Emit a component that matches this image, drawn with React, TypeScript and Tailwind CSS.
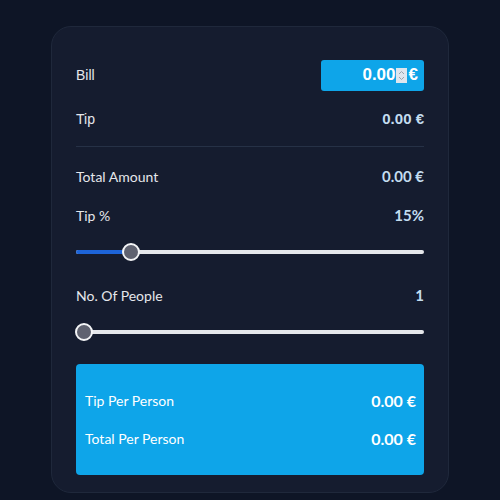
import React from "react";

const Slider = ({ left, fill }: { left: number; fill: boolean }) => (
  <div className="relative h-4 flex items-center">
    <div className="w-full h-[4px] rounded-full bg-[#e5e7eb]" />
    {fill && <div className="absolute left-0 h-[4px] rounded-full bg-[#1d64d8]" style={{ width: `${left}px` }} />}
    <div
      className="absolute w-[18px] h-[18px] rounded-full bg-[#5f6270] border-2 border-[#f3f4f6] -translate-x-1/2"
      style={{ left: `${left}px` }}
    />
  </div>
);

export default function App() {
  const mul = { fontFamily: "Lato, 'Noto Sans', sans-serif" };
  const ar = { fontFamily: "'Liberation Sans', Arial, sans-serif" };
  return (
    <div className="w-[500px] h-[500px] bg-[#0e1526] pt-[26px] px-[51px]">
      <div className="h-[467px] rounded-[20px] border border-[#1f283b] bg-[#151c2f] pl-[24px] pr-[24px] pt-[32px]">
        <div className="flex items-center justify-between h-[32px]" style={ar}>
          <span className="text-[14px] text-[#e5e7eb]">Bill</span>
          <div className="w-[103px] h-[31px] rounded-[3px] bg-[#0ea5e9] flex items-center justify-end pr-[6px] text-white font-bold text-[17px]">
            <span>0.00</span>
            <span className="w-[11px] h-[15px] bg-[#dfe6ee] flex flex-col items-center justify-center mr-[2px]">
              <svg width="7" height="11" viewBox="0 0 7 11" fill="none" stroke="#9aa3ad" strokeWidth="1">
                <path d="M1 4 L3.5 1.5 L6 4" />
                <path d="M1 7 L3.5 9.5 L6 7" />
              </svg>
            </span>
            <span>€</span>
          </div>
        </div>
        <div className="flex items-center justify-between mt-[18px] h-[20px]" style={ar}>
          <span className="text-[14px] text-[#e5e7eb]">Tip</span>
          <span className="text-[15px] font-bold text-[#c3dcef]">0.00 €</span>
        </div>
        <div className="h-px bg-[#263146] mt-[17px]" />
        <div style={mul}>
          <div className="flex items-center justify-between mt-[19px] h-[20px]">
            <span className="text-[14px] text-[#e5e7eb]">Total Amount</span>
            <span className="text-[15px] font-bold text-[#c3dcef]">0.00 €</span>
          </div>
          <div className="flex items-center justify-between mt-[19px] h-[20px]">
            <span className="text-[14px] text-[#e5e7eb]">Tip %</span>
            <span className="text-[15px] font-bold text-[#c3dcef]">15%</span>
          </div>
          <div className="mt-[19px]">
            <Slider left={55} fill />
          </div>
          <div className="flex items-center justify-between mt-[25px] h-[20px]">
            <span className="text-[14px] text-[#e5e7eb]">No. Of People</span>
            <span className="text-[15px] font-bold text-[#c3dcef]">1</span>
          </div>
          <div className="mt-[19px]">
            <Slider left={8} fill={false} />
          </div>
          <div className="mt-[24px] h-[111px] rounded-[4px] bg-[#0ea5e9] pl-[9px] pr-[8px] flex flex-col justify-center gap-[18px]">
            <div className="flex items-center justify-between h-[20px]">
              <span className="text-[14px] text-white">Tip Per Person</span>
              <span className="text-[16px] font-bold text-white">0.00 €</span>
            </div>
            <div className="flex items-center justify-between h-[20px]">
              <span className="text-[14px] text-white">Total Per Person</span>
              <span className="text-[16px] font-bold text-white">0.00 €</span>
            </div>
          </div>
        </div>
      </div>
    </div>
  );
}
